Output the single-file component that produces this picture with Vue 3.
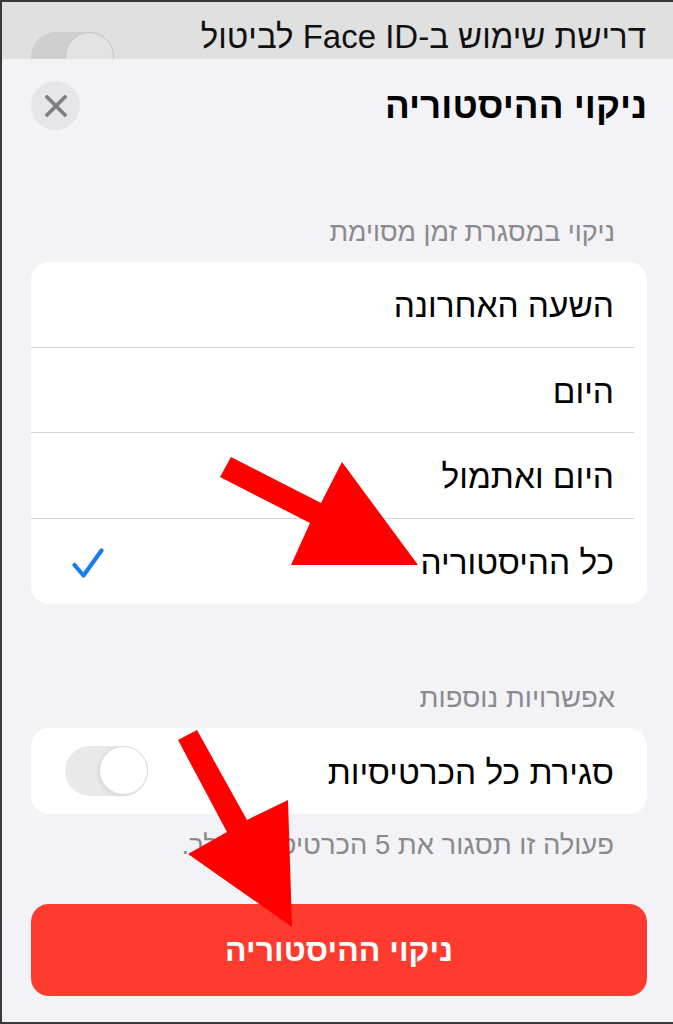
<script setup>
const rows = [
  { label: 'השעה האחרונה', checked: false },
  { label: 'היום', checked: false },
  { label: 'היום ואתמול', checked: false },
  { label: 'כל ההיסטוריה', checked: true },
]
</script>

<template>
  <div class="page" dir="rtl">
    <div class="behind">
      <span class="behind-label">דרישת שימוש ב-Face ID לביטול</span>
      <span class="behind-toggle"><span class="behind-knob"></span></span>
    </div>
    <div class="sheet">
      <header class="head">
        <h1 class="title">ניקוי ההיסטוריה</h1>
        <button class="close" aria-label="סגירה">
          <svg width="22" height="22" viewBox="0 0 22 22"><path d="M2 2 L20 20 M20 2 L2 20" stroke="#7e7e83" stroke-width="3.8" stroke-linecap="round" fill="none"/></svg>
        </button>
      </header>
      <div class="section-label first">ניקוי במסגרת זמן מסוימת</div>
      <div class="card">
        <div v-for="row in rows" :key="row.label" class="row">
          <span>{{ row.label }}</span>
          <svg v-if="row.checked" class="check" width="32" height="30" viewBox="0 0 32 30"><path d="M2.5 17 L11.5 27.5 L29.5 2.5" stroke="#167cf0" stroke-width="4.2" stroke-linecap="round" stroke-linejoin="round" fill="none"/></svg>
        </div>
      </div>
      <div class="section-label second">אפשרויות נוספות</div>
      <div class="card">
        <div class="row single">
          <span>סגירת כל הכרטיסיות</span>
          <span class="toggle"><span class="knob"></span></span>
        </div>
      </div>
      <div class="note">פעולה זו תסגור את 5 הכרטיסיות שלך.</div>
      <button class="danger">ניקוי ההיסטוריה</button>
    </div>
    <svg class="arrows" width="673" height="1024" viewBox="0 0 673 1024">
      <polygon fill="#ff0000" points="231,457 220,477 310,523 291,565 418,565 342,462 321,503" />
      <polygon fill="#ff0000" points="197,730 178,740 227,832 188,854 292,927 288,800 247,820" />
    </svg>
  </div>
</template>

<style scoped>
.page {
  position: relative;
  width: 673px;
  height: 1024px;
  box-sizing: border-box;
  border: 2px solid #3a3a3a;
  border-right: 0;
  overflow: hidden;
  background: #f2f2f7;
  font-family: "Liberation Sans", Arial, sans-serif;
  color: #000;
}
.behind {
  height: 57px;
  background: #e0e0e0;
  overflow: hidden;
  display: flex;
  justify-content: space-between;
  padding: 0 27px 0 29px;
}
.behind-label {
  font-size: 33px;
  line-height: 32px;
  margin-top: 19px;
  color: #111;
  white-space: nowrap;
}
.behind-toggle {
  width: 83px;
  height: 50px;
  margin-top: 30px;
  border-radius: 25px;
  background: #cfcfcf;
  position: relative;
  display: block;
}
.behind-knob {
  position: absolute;
  top: 1px;
  left: 35px;
  width: 47px;
  height: 47px;
  border-radius: 50%;
  background: #e3e3e3;
  box-shadow: 0 0 0 1px #c5c5c5;
}
.sheet {
  height: 965px;
  background: #f2f2f7;
  border-radius: 14px 14px 0 0;
  padding: 0 26px 0 29px;
  display: flex;
  flex-direction: column;
}
.head {
  height: 71px;
  margin-top: 22px;
  display: flex;
  align-items: flex-start;
  justify-content: space-between;
}
.title {
  margin: 0;
  font-size: 36.8px;
  line-height: 50px;
  font-weight: 700;
  white-space: nowrap;
}
.close {
  width: 49px;
  height: 49px;
  border: 0;
  padding: 0;
  border-radius: 50%;
  background: #e5e5ea;
  display: flex;
  align-items: center;
  justify-content: center;
}
.section-label {
  font-size: 26.9px;
  line-height: 32px;
  color: #8a8a8e;
  padding-right: 32px;
}
.section-label.first { margin-top: 64px; margin-bottom: 14px; }
.section-label.second { margin-top: 78px; margin-bottom: 14px; font-size: 27.5px; }
.card {
  background: #fff;
  border-radius: 18px;
  overflow: hidden;
}
.row {
  height: 85.5px;
  box-sizing: border-box;
  margin-right: 13px;
  padding: 4px 20px 0 0;
  display: flex;
  align-items: center;
  justify-content: space-between;
  font-size: 33.4px;
  border-bottom: 1px solid #d4d4d8;
}
.row:last-child { border-bottom: 0; }
.check { margin-left: 41px; }
.toggle {
  width: 83px;
  height: 50px;
  margin-top: -4px;
  margin-left: 34px;
  border-radius: 25px;
  background: #e9e9ea;
  position: relative;
  display: block;
}
.knob {
  position: absolute;
  top: 1px;
  left: 35px;
  width: 47px;
  height: 47px;
  border-radius: 50%;
  background: #fff;
  box-shadow: 0 0 0 1px #dcdcdc, -2px 2px 4px rgba(0,0,0,.08);
}
.note {
  font-size: 27.4px;
  line-height: 32px;
  color: #8a8a8e;
  padding-right: 33px;
  margin-top: 15px;
  white-space: nowrap;
}
.danger {
  margin-top: 43px;
  height: 92px;
  border: 0;
  border-radius: 18px;
  background: #ff3b30;
  color: #fff;
  padding: 2px 0 0;
  font: 700 32px "Liberation Sans", Arial, sans-serif;
}
.arrows {
  position: absolute;
  left: -2px;
  top: -2px;
  pointer-events: none;
}
</style>
